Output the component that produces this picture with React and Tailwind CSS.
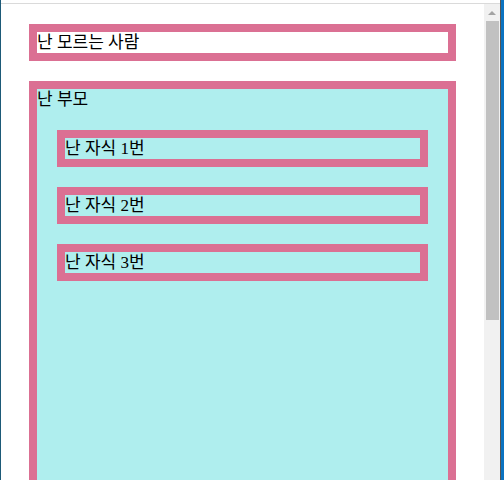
import React from "react";

const font = "font-['Liberation_Serif','Noto_Sans_CJK_KR',serif] text-[17px] leading-[21px] text-black";

const Child = ({ label }) => (
  <div className="border-8 border-[#db7093] h-[37px]">
    <div className={font}>{label}</div>
  </div>
);

const App = () => {
  const children = ["난 자식 1번", "난 자식 2번", "난 자식 3번"];

  return (
    <div className="h-[480px] w-[504px] flex bg-white overflow-hidden">
      {/* left window edge */}
      <div className="w-px bg-[#1d5a78]" />

      <div className="flex-1 flex flex-col min-w-0">
        <div className="h-[3px] bg-white" />
        <div className="h-px bg-[#dadada]" />

        <div className="flex flex-1 min-h-0">
          {/* page body */}
          <div className="w-[483px] overflow-hidden px-[28px] pt-5 flex flex-col gap-5">
            <div className="border-8 border-[#db7093] h-[37px] shrink-0">
              <div className={font}>난 모르는 사람</div>
            </div>

            <div className="border-8 border-[#db7093] bg-[#afeeee] h-[600px] shrink-0">
              <div className={font}>난 부모</div>
              <div className="flex flex-col gap-5 mx-5 mt-5">
                {children.map((c) => (
                  <Child key={c} label={c} />
                ))}
              </div>
            </div>
          </div>

          {/* scrollbar */}
          <div className="w-4 bg-[#f1f1f1] flex flex-col items-center">
            <div className="h-[17px] flex items-center justify-center">
              <div className="w-0 h-0 border-l-4 border-r-4 border-b-4 border-l-transparent border-r-transparent border-b-[#a3a3a3]" />
            </div>
            <div className="w-[13px] h-[299px] bg-[#c1c1c1] ml-[1px]" />
          </div>
        </div>
      </div>

      {/* right window edge */}
      <div className="w-px bg-[#555555]" />
      <div className="w-[3px] bg-[#0a72c0]" />
    </div>
  );
};

export default App;
